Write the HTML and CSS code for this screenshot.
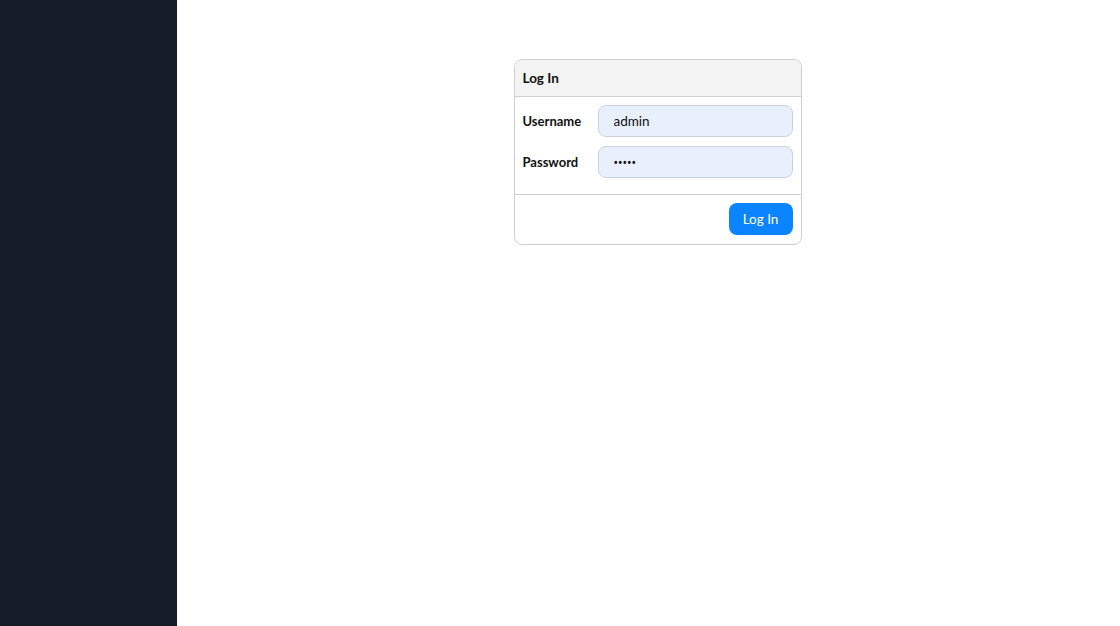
FILE: index.html
```html
<!DOCTYPE html>
<html lang="en">
<head>
    <meta charset="UTF-8">
    <meta name="viewport" content="width=device-width, initial-scale=1.0">
    <title>Log In</title>
    <link rel="stylesheet" href="styles.css">
</head>
<body>
    <div class="sidebar"></div>
    <div class="main">
        <form class="card">
            <div class="card-header">Log In</div>
            <div class="card-body">
                <div class="form-row">
                    <label for="username">Username</label>
                    <input type="text" id="username" value="admin">
                </div>
                <div class="form-row">
                    <label for="password">Password</label>
                    <input type="password" id="password" class="secret" value="admin">
                </div>
            </div>
            <div class="card-footer">
                <button type="button">Log In</button>
            </div>
        </form>
    </div>
</body>
</html>
```

FILE: styles.css
```css
body {
    font-family: Lato, "Noto Sans", sans-serif;
    font-size: 13.5px;
    margin: 0;
    padding: 0;
    display: flex;
    height: 626px;
    background: #ffffff;
    color: #111;
}
.sidebar {
    width: 177px;
    flex-shrink: 0;
    background: #151b27;
}
.main {
    flex: 1;
    display: flex;
    justify-content: center;
    align-items: flex-start;
    padding-left: 18px;
    padding-top: 59px;
}
.card {
    width: 288px;
    box-sizing: border-box;
    border: 1px solid #cfcfcf;
    border-radius: 8px;
    overflow: hidden;
}
.card-header {
    height: 37px;
    box-sizing: border-box;
    padding: 0 8px;
    display: flex;
    align-items: center;
    background: #f3f3f3;
    border-bottom: 1px solid #cfcfcf;
    font-weight: bold;
}
.card-body {
    padding: 8px 8px 16px;
    border-bottom: 1px solid #cfcfcf;
}
.form-row {
    display: flex;
    align-items: center;
    margin-bottom: 9px;
}
.form-row:last-child {
    margin-bottom: 0;
}
.form-row label {
    width: 75px;
    font-weight: bold;
    font-size: 13px;
}
.form-row input {
    width: 195px;
    height: 32px;
    box-sizing: border-box;
    padding: 0 15px;
    border: 1px solid #c9d1dc;
    border-radius: 8px;
    background: #e8f0fe;
    font-family: inherit;
    font-size: 13.5px;
    color: #111;
    outline: none;
}
.form-row input.secret {
    font-family: "Noto Sans", sans-serif;
    font-size: 12px;
}
.card-footer {
    display: flex;
    justify-content: flex-end;
    padding: 8px 8px 9px;
}
button {
    width: 64px;
    height: 32px;
    border: none;
    border-radius: 8px;
    background: #0a84ff;
    color: #fff;
    font-family: inherit;
    font-size: 13.5px;
    cursor: pointer;
}
```
